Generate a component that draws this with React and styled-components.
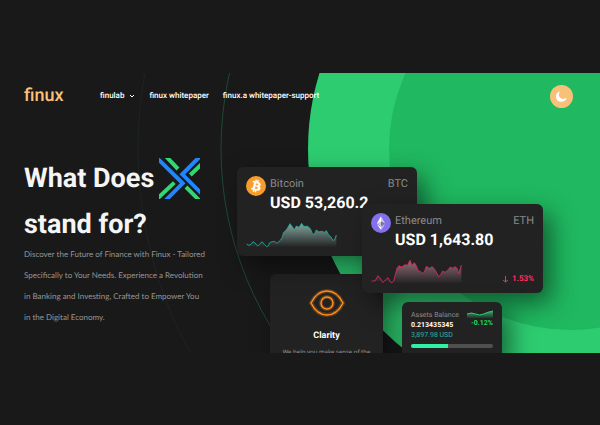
import React from "react";
import styled, { createGlobalStyle } from "styled-components";

const GlobalStyle = createGlobalStyle`
  * { box-sizing: border-box; }
  body {
    margin: 0;
    background: #191919;
    color: #fff;
    font-family: Roboto, "Liberation Sans", sans-serif;
    text-rendering: geometricPrecision;
  }
  h1, h2, p { margin: 0; }
`;

const Page = styled.div`
  padding: 73px 0 72px;
`;

const Hero = styled.div`
  position: relative;
  height: 280px;
  overflow: hidden;
`;

const Backdrop = styled.svg`
  position: absolute;
  top: 0;
  right: 0;
`;

const Header = styled.header`
  position: relative;
  z-index: 2;
  display: flex;
  align-items: center;
  height: 46px;
  padding: 0 27px 0 24px;
`;

const Brand = styled.a`
  width: 76px;
  color: #fbc278;
  font-size: 18px;
  font-weight: 500;
  line-height: 24px;
  text-decoration: none;
`;

const Nav = styled.nav`
  display: flex;
  flex: 1;
  gap: 14px;
`;

const NavLink = styled.a`
  display: flex;
  align-items: center;
  gap: 5px;
  color: #fff;
  font-size: 8px;
  font-weight: 500;
  line-height: 12px;
  text-decoration: none;
  white-space: nowrap;
`;

const ThemeButton = styled.button`
  display: grid;
  place-items: center;
  width: 23px;
  height: 23px;
  padding: 0;
  border: 0;
  border-radius: 50%;
  background: #f8c078;
`;

const Main = styled.main`
  position: relative;
  display: flex;
  padding: 36px 0 0 24px;
`;

const Copy = styled.section`
  width: 196px;
  flex: none;
`;

const Title = styled.h1`
  color: #f5f5f5;
  font-size: 27px;
  font-weight: 700;
  line-height: 46px;
  white-space: nowrap;
`;

const TitleLine = styled.span`
  display: flex;
  align-items: center;
  gap: 5px;
`;

const Lead = styled.p`
  color: #979797;
  font-family: Lato, "Noto Sans", sans-serif;
  font-size: 8px;
  line-height: 21px;
  margin-top: -3px;
  white-space: pre-line;
`;

const Stage = styled.section`
  position: relative;
  flex: 1;
`;

const Card = styled.article`
  position: absolute;
  left: ${(p) => p.$left}px;
  top: ${(p) => p.$top}px;
  width: ${(p) => p.$width}px;
  border-radius: 6px;
  background: #222;
  box-shadow: 8px 10px 24px rgba(0, 0, 0, 0.5);
`;

const CoinCard = styled(Card)`
  display: grid;
  grid-template-columns: 19px 1fr auto;
  grid-template-rows: 16px 22px 1fr;
  column-gap: 5px;
  height: 89px;
  padding: 9px 9px 8px;
`;

const CoinIcon = styled.svg`
  grid-row: 1 / 3;
`;

const CoinName = styled.span`
  color: #8a8a8a;
  font-size: 11px;
  line-height: 16px;
`;

const Price = styled.strong`
  grid-column: 2 / 4;
  font-size: 16px;
  font-weight: 700;
  line-height: 22px;
  white-space: nowrap;
`;

const ChartRow = styled.div`
  grid-column: 1 / 4;
  display: flex;
  align-items: flex-end;
  justify-content: space-between;
`;

const Change = styled.span`
  display: flex;
  align-items: center;
  gap: 4px;
  color: #ff2b5e;
  font-size: 8px;
  font-weight: 700;
  line-height: 12px;
`;

const FeatureCard = styled(Card)`
  display: flex;
  flex-direction: column;
  align-items: center;
  height: 110px;
  padding-top: 12px;
`;

const FeatureTitle = styled.h2`
  margin-top: 10px;
  font-size: 9px;
  font-weight: 700;
  line-height: 12px;
`;

const FeatureText = styled.p`
  margin-top: 4px;
  color: #979797;
  font-family: "Noto Sans", sans-serif;
  font-size: 6px;
  line-height: 12px;
  white-space: nowrap;
`;

const BalanceCard = styled(Card)`
  height: 60px;
  padding: 8px 9px;
`;

const BalanceRow = styled.div`
  display: flex;
  justify-content: space-between;
`;

const BalanceColumn = styled.div`
  display: flex;
  flex-direction: column;
  align-items: ${(p) => (p.$end ? "flex-end" : "flex-start")};
`;

const Small = styled.span`
  color: ${(p) => p.$color};
  font-size: 7px;
  font-weight: ${(p) => p.$weight};
  line-height: 10px;
  white-space: nowrap;
`;

const Progress = styled.div`
  height: 4px;
  margin-top: 4px;
  border-radius: 2px;
  background: linear-gradient(to right, #31efa5 45%, #505050 45%);
`;

const btcLine =
  "79,249 86,253 92,250 98,242 104,246 112,255 118,250 125,242 132,250 139,257 145,254 148,245 156,242 162,241 170,247 180,238 185,230 190,214 196,209 202,200 209,188 215,196 222,206 228,195 236,199 244,187 250,196 262,196 270,203 275,215 281,222 288,207 296,213 304,211 312,214 318,209 325,222 332,228 338,239 344,234 348,222";
const ethLine =
  "34,260 44,260 53,244 60,252 68,265 75,257 83,250 90,263 95,265 100,261 104,245 110,222 116,214 124,218 134,211 141,213 149,198 155,213 162,205 168,214 173,228 182,233 188,238 193,230 198,216 207,222 216,217 225,228 235,247 241,241 247,230 254,234 262,228 270,218 277,222 284,217 290,222 295,238 300,222 303,212";

function Sparkline({ id, line, box, area, stroke, fill }) {
  return (
    <svg width="91" height="26" viewBox={box} aria-hidden="true">
      <linearGradient id={id} x1="0" y1="0" x2="0" y2="1">
        <stop offset="0" stopColor={fill} stopOpacity="0.9" />
        <stop offset="1" stopColor={fill} stopOpacity="0" />
      </linearGradient>
      <polygon points={`${line} ${area}`} fill={`url(#${id})`} />
      <polyline points={line} fill="none" stroke={stroke} strokeWidth="2.6" strokeLinejoin="round" />
    </svg>
  );
}

function LogoMark() {
  return (
    <svg width="41" height="41" viewBox="27 21 123 123" role="img" aria-label="Finux">
      <path d="M23 23 98 97 46 149" fill="none" stroke="#1f86ff" strokeWidth="12" />
      <path d="M149 17 97 70 155 128" fill="none" stroke="#1f86ff" strokeWidth="12" />
      <path d="M48 16 84 54M154 40 121 72M23 142 73 95M108 108 149 149" fill="none" stroke="#2fd873" strokeWidth="12" />
    </svg>
  );
}

export default function App() {
  return (
    <>
      <GlobalStyle />
      <Page>
        <Hero>
          <Backdrop width="600" height="280" viewBox="0 0 600 280" aria-hidden="true">
            <circle cx="563" cy="76" r="425" fill="none" stroke="#1b2521" />
            <circle cx="563" cy="76" r="342" fill="none" stroke="#1d4a32" />
            <circle cx="565" cy="76" r="257" fill="#2ecc71" />
            <circle cx="570" cy="76" r="181" fill="#20b860" />
          </Backdrop>
          <Header>
            <Brand href="#">finux</Brand>
            <Nav>
              <NavLink href="#finulab">
                finulab
                <svg width="6" height="6" viewBox="0 0 6 6" fill="none" stroke="#fff" aria-hidden="true">
                  <path d="M1 2 3 4 5 2" />
                </svg>
              </NavLink>
              <NavLink href="#whitepaper">finux whitepaper</NavLink>
              <NavLink href="#support">finux.a whitepaper-support</NavLink>
            </Nav>
            <ThemeButton type="button" aria-label="Toggle theme">
              <svg width="11" height="11" viewBox="0 0 22 22" aria-hidden="true">
                <path d="M8 1A10.500 10.500 0 1 0 21 13A7.500 7.500 0 0 1 8 1Z" fill="#fff" />
              </svg>
            </ThemeButton>
          </Header>
          <Main>
            <Copy>
              <Title>
                <TitleLine>
                  What Does <LogoMark />
                </TitleLine>
                <TitleLine>stand for?</TitleLine>
              </Title>
              <Lead>
                {"Discover the Future of Finance with Finux - Tailored\nSpecifically to Your Needs. Experience a Revolution\nin Banking and Investing, Crafted to Empower You\nin the Digital Economy."}
              </Lead>
            </Copy>
            <Stage>
              <FeatureCard $left={50} $top={119} $width={113}>
                <svg width="38" height="34" viewBox="0 0 38 34" fill="none" stroke="#ff8c1a" aria-hidden="true">
                  <g opacity="0.25" strokeWidth="4">
                    <path d="M3 17C11 1 27 1 35 17C27 33 11 33 3 17Z" />
                    <circle cx="19" cy="17" r="6" />
                  </g>
                  <g strokeWidth="1.500">
                    <path d="M3 17C11 1 27 1 35 17C27 33 11 33 3 17Z" />
                    <circle cx="19" cy="17" r="6" />
                  </g>
                </svg>
                <FeatureTitle>Clarity</FeatureTitle>
                <FeatureText>We help you make sense of the</FeatureText>
              </FeatureCard>
              <CoinCard $left={17} $top={12} $width={180}>
                <CoinIcon width="20" height="20" viewBox="0 0 32 32" aria-hidden="true">
                  <circle cx="16" cy="16" r="16" fill="#f99d2a" />
                  <path
                    fill="#fff"
                    stroke="#fff"
                    strokeWidth="0.6"
                    d="M23.189 14.020c.314-2.096-1.283-3.223-3.465-3.975l.708-2.840-1.728-.430-.690 2.765c-.454-.114-.920-.220-1.385-.326l.695-2.783L15.596 6l-.708 2.839c-.376-.086-.746-.170-1.104-.260l.002-.009-2.384-.595-.460 1.846s1.283.294 1.256.312c.700.175.826.638.805 1.006l-.806 3.235c.048.012.110.030.180.057l-.183-.045-1.130 4.532c-.086.212-.303.531-.793.410.018.025-1.256-.313-1.256-.313l-.858 1.978 2.250.561c.418.105.828.215 1.231.318l-.715 2.872 1.727.430.708-2.840c.472.127.930.245 1.378.357l-.706 2.828 1.728.430.715-2.866c2.948.558 5.164.333 6.097-2.333.752-2.146-.037-3.385-1.588-4.192 1.130-.260 1.980-1.003 2.207-2.538zm-3.950 5.538c-.533 2.147-4.148.986-5.320.695l.950-3.805c1.172.293 4.929.872 4.370 3.110zm.535-5.569c-.487 1.953-3.495.960-4.470.717l.860-3.450c.975.243 4.118.696 3.610 2.733z"
                  />
                </CoinIcon>
                <CoinName>Bitcoin</CoinName>
                <CoinName>BTC</CoinName>
                <Price>USD 53,260.2</Price>
                <ChartRow>
                  <Sparkline id="btc" line={btcLine} box="77 183 273 78" area="348,259 79,259" stroke="#22a89a" fill="#8fb5ab" />
                </ChartRow>
              </CoinCard>
              <CoinCard $left={142} $top={49} $width={181}>
                <CoinIcon width="20" height="20" viewBox="0 0 32 32" aria-hidden="true">
                  <circle cx="16" cy="16" r="16" fill="#8370eb" />
                  <path d="M16 5 9.500 16.500 16 20.500Z" fill="#fff" />
                  <path d="M16 5 22.500 16.500 16 20.500Z" fill="#ccc8e8" />
                  <path d="M16 13.500 9.500 16.500 16 20.500Z" fill="#c9c6dc" />
                  <path d="M16 13.500 22.500 16.500 16 20.500Z" fill="#77758f" />
                  <path d="M9.500 18 16 27V22Z" fill="#fff" />
                  <path d="M22.500 18 16 27V22Z" fill="#c8c2ee" />
                </CoinIcon>
                <CoinName>Ethereum</CoinName>
                <CoinName>ETH</CoinName>
                <Price>USD 1,643.80</Price>
                <ChartRow>
                  <Sparkline id="eth" line={ethLine} box="32 194 273 78" area="303,268 100,268 100,261" stroke="#d9295b" fill="#a07583" />
                  <Change>
                    <svg width="5" height="7" viewBox="0 0 5 7" fill="none" stroke="#ff2b5e" aria-hidden="true">
                      <path d="M2.500 0V6M0 4 2.500 6 5 4" />
                    </svg>
                    1.53%
                  </Change>
                </ChartRow>
              </CoinCard>
              <BalanceCard $left={182} $top={147} $width={100}>
                <BalanceRow>
                  <BalanceColumn>
                    <Small $color="#8a8a8a" $weight={400}>Assets Balance</Small>
                    <Small $color="#fff" $weight={700}>0.213435345</Small>
                    <Small $color="#24b8a6" $weight={400}>3,897.98 USD</Small>
                  </BalanceColumn>
                  <BalanceColumn $end>
                    <svg width="26" height="8" viewBox="0 0 78 24" aria-hidden="true">
                      <linearGradient id="balance" x1="0" y1="0" x2="0" y2="1">
                        <stop offset="0" stopColor="#2fae70" />
                        <stop offset="1" stopColor="#2fae70" stopOpacity="0.1" />
                      </linearGradient>
                      <path d="M0 12Q14 6 26 12T50 12T78 3V24H0Z" fill="url(#balance)" />
                      <path d="M0 12Q14 6 26 12T50 12T78 3" fill="none" stroke="#2ecc71" strokeWidth="3" />
                    </svg>
                    <Small $color="#1fd75f" $weight={700}>-0.12%</Small>
                  </BalanceColumn>
                </BalanceRow>
                <Progress role="progressbar" aria-label="Assets" aria-valuenow={45} aria-valuemin={0} aria-valuemax={100} />
              </BalanceCard>
            </Stage>
          </Main>
        </Hero>
      </Page>
    </>
  );
}
